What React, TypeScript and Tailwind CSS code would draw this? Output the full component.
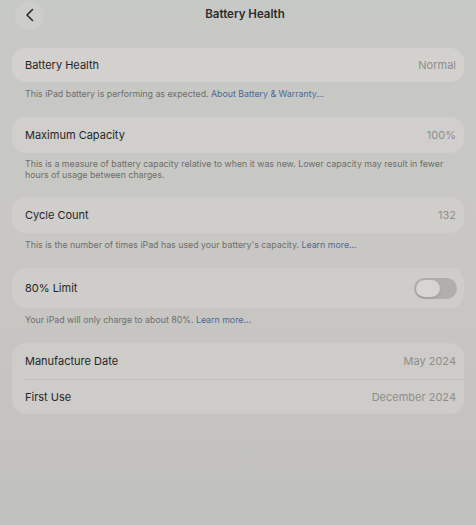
import React from 'react';

const font = { fontFamily: 'Inter, "Liberation Sans", sans-serif' };

function Row({ label, value, h = 'h-[36px]' }: { label: string; value: string; h?: string }) {
  return (
    <div className={`flex ${h} items-center justify-between pl-[13px] pr-[8px]`}>
      <span className="text-[11px] text-[#262626]">{label}</span>
      <span className="text-[11px] text-[#8f8e8b]">{value}</span>
    </div>
  );
}

function Note({ children }: { children: React.ReactNode }) {
  return (
    <p className="px-[13px] pt-[6px] pb-[18px] pr-[20px] text-[8.8px] leading-[11px] text-[#6e6e6c]">{children}</p>
  );
}

function Link({ children }: { children: React.ReactNode }) {
  return <span className="text-[#4f6796]">{children}</span>;
}

export default function App() {
  return (
    <div
      style={font}
      className="min-h-[525px] w-[476px] bg-gradient-to-b from-[#c7c9c4] via-[#c8c7c3] to-[#c0c0bc] px-[12px]"
    >
      {/* top bar */}
      <div className="grid h-[30px] grid-cols-[1fr_auto_1fr] items-center">
        <div className="pl-[3px]">
          <div className="flex h-[29px] w-[29px] items-center justify-center rounded-full bg-[#cdcec9]">
            <svg width="10" height="14" viewBox="0 0 10 14" fill="none">
              <path d="M7.5 1.5L2 7l5.5 5.5" stroke="#2a2a2a" strokeWidth="1.6" strokeLinecap="round" strokeLinejoin="round" />
            </svg>
          </div>
        </div>
        <h1 className="pl-[14px] text-[11.5px] font-semibold text-[#2b2b2b]">Battery Health</h1>
        <div />
      </div>

      <div className="mt-[18px] flex flex-col">
        <div className="rounded-[14px] bg-[#d2d1cd]">
          <Row label="Battery Health" value="Normal" h="h-[34px]" />
        </div>
        <Note>
          This iPad battery is performing as expected. <Link>About Battery &amp; Warranty...</Link>
        </Note>

        <div className="rounded-[14px] bg-[#d0cfcb]">
          <Row label="Maximum Capacity" value="100%" />
        </div>
        <p className="px-[13px] pt-[5px] pb-[17px] pr-[20px] text-[8.8px] leading-[11px] text-[#6e6e6c]">
          This is a measure of battery capacity relative to when it was new. Lower capacity may result in fewer hours of usage between charges.
        </p>

        <div className="rounded-[14px] bg-[#cfcecb]">
          <Row label="Cycle Count" value="132" />
        </div>
        <Note>
          This is the number of times iPad has used your battery's capacity. <Link>Learn more...</Link>
        </Note>

        <div className="rounded-[14px] bg-[#cecdca]">
          <div className="flex h-[40px] items-center justify-between pl-[13px] pr-[7px]">
            <span className="text-[11px] text-[#262626]">80% Limit</span>
            <div className="flex h-[21px] w-[43px] items-center rounded-full bg-[#b0afab] p-[2px]">
              <div className="h-[17px] w-[24px] rounded-full bg-[#d6d5d1] shadow-sm" />
            </div>
          </div>
        </div>
        <Note>
          Your iPad will only charge to about 80%. <Link>Learn more...</Link>
        </Note>

        <div className="rounded-[14px] bg-[#cdccc8]">
          <Row label="Manufacture Date" value="May 2024" />
          <div className="ml-[12px] h-px bg-[#bfbebb]" />
          <Row label="First Use" value="December 2024" h="h-[34px]" />
        </div>
      </div>
    </div>
  );
}
